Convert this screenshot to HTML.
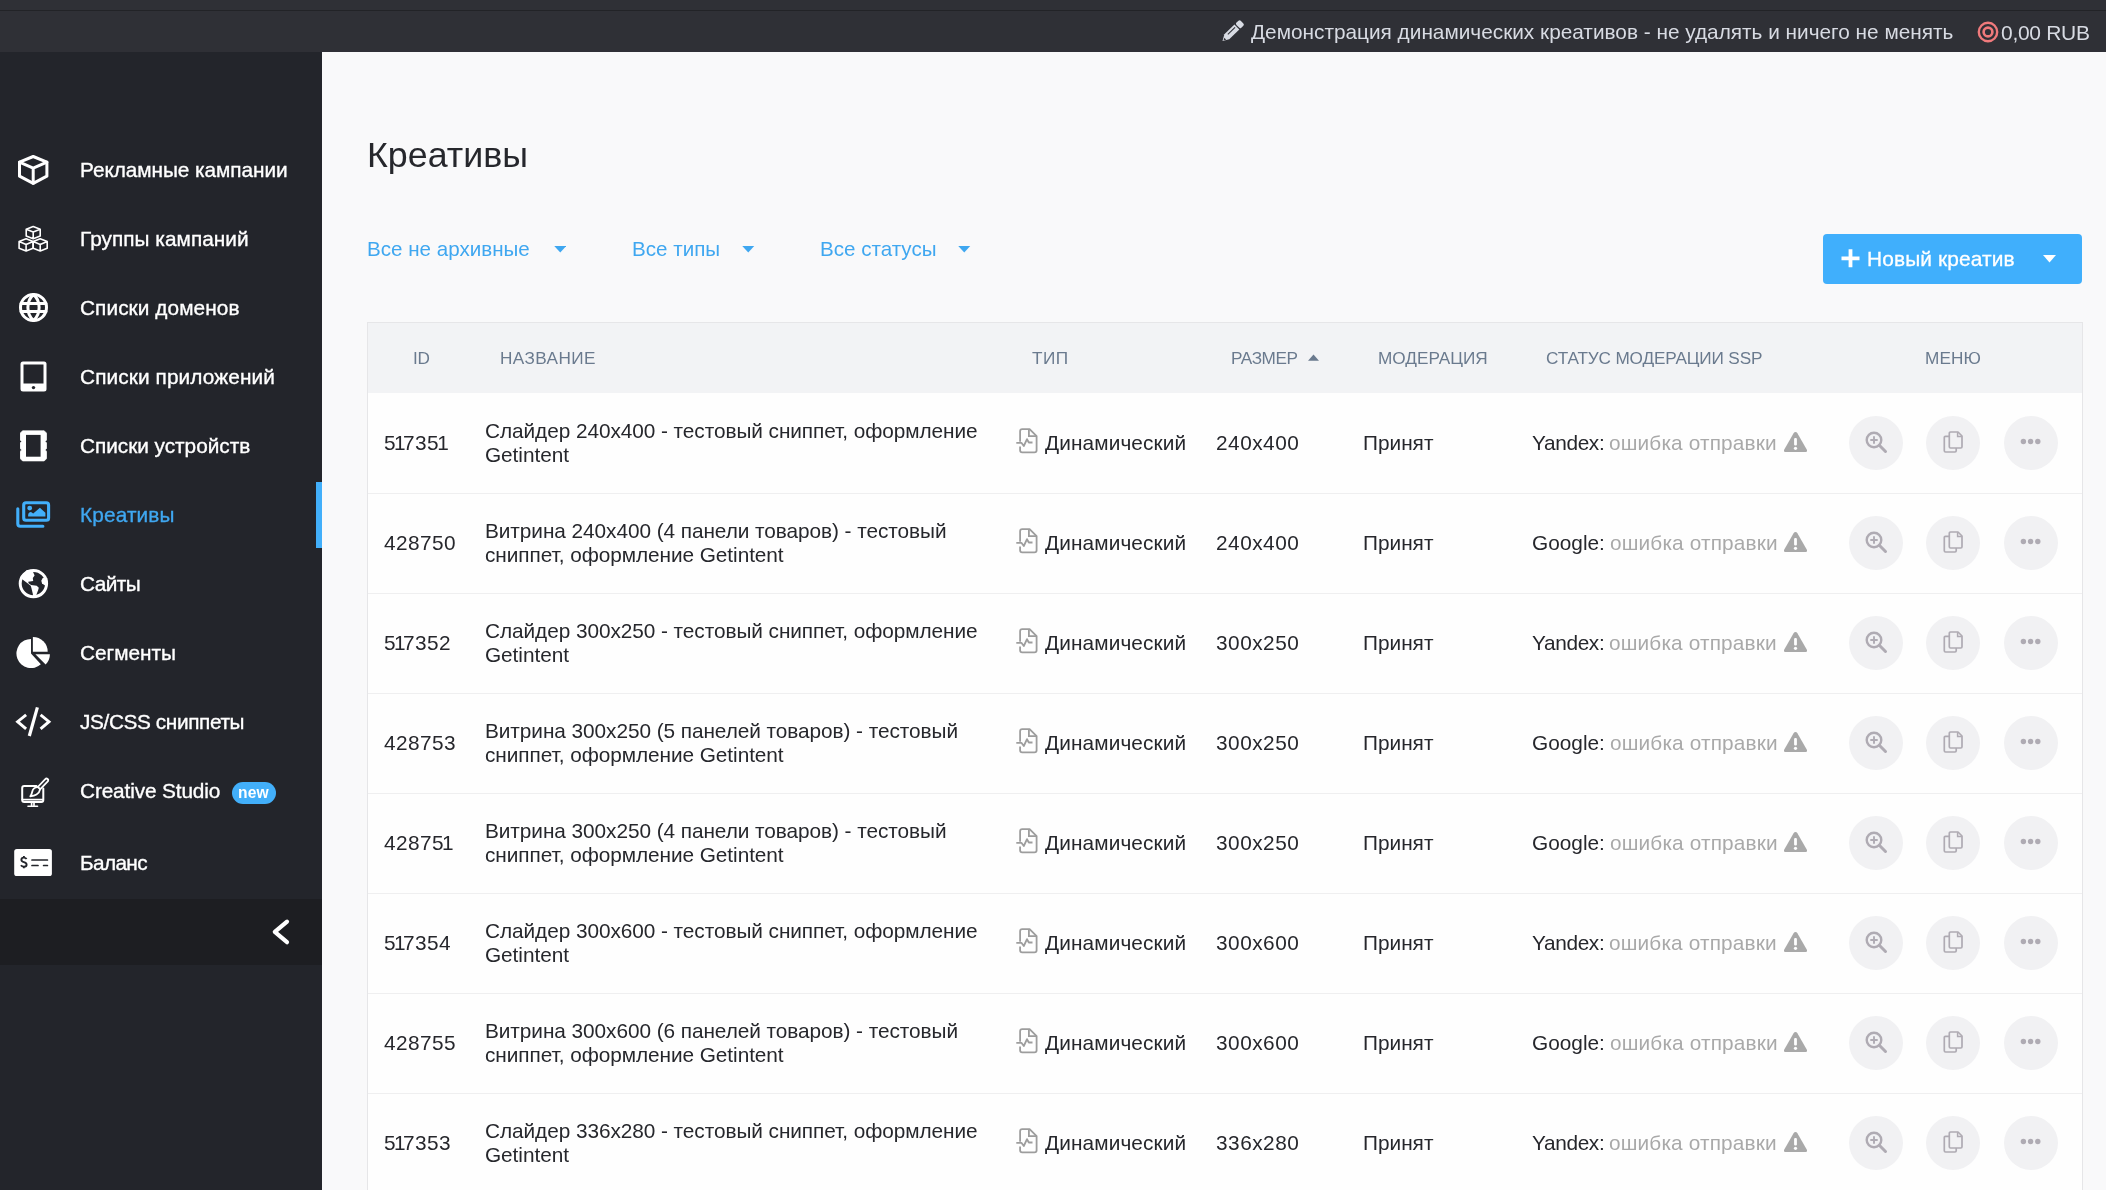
<!DOCTYPE html>
<html><head><meta charset="utf-8"><title>Креативы</title>
<style>
html,body{margin:0;padding:0;}
body{width:2106px;height:1190px;overflow:hidden;position:relative;background:#f9f9fa;font-family:"Liberation Sans", sans-serif;}
.r{position:absolute;}
.t{position:absolute;line-height:1;white-space:nowrap;font-family:"Liberation Sans", sans-serif;will-change:transform;}
.side{-webkit-text-stroke:0.35px currentColor;}
.semi{-webkit-text-stroke:0.3px currentColor;}
</style></head><body>
<div class="r" style="left:0px;top:0px;width:2106px;height:52px;background:#2f3036;"></div>
<div class="r" style="left:0px;top:10px;width:2106px;height:1px;background:#222327;"></div>
<svg class="r" style="left:1216px;top:14px;" width="34" height="34" viewBox="0 0 34 34"><g transform="translate(16.2,17.6) rotate(-44) translate(-13.5,0)"><path d="M0 0 L6 -3.5 H20 V3.5 H6 Z" fill="#d8dbe3"/><path d="M8.5 -1.1 H18.5" stroke="#2f3036" stroke-width="1.1"/><path d="M1.3 0.3 L3.6 -1.1 V1.6 Z" fill="#2f3036"/><rect x="21.2" y="-3.5" width="6" height="7" rx="1.6" fill="#d8dbe3"/></g></svg>
<div class="t " style="left:1250.50px;top:21.92px;font-size:20.80px;color:#d8dbe3;">Демонстрация динамических креативов - не удалять и ничего не менять</div>
<svg class="r" style="left:1977px;top:20.5px;" width="22" height="22" viewBox="0 0 22 22"><circle cx="11" cy="11" r="9.2" fill="none" stroke="#f07a7c" stroke-width="2.4"/><circle cx="11" cy="11" r="4.4" fill="none" stroke="#f07a7c" stroke-width="2.6"/></svg>
<div class="t " style="left:2001.00px;top:21.75px;font-size:21.00px;color:#d8dbe3;letter-spacing:-0.300px;">0,00 RUB</div>
<div class="r" style="left:0px;top:52px;width:322px;height:1138px;background:#23252b;"></div>
<div class="r" style="left:0px;top:899px;width:322px;height:66px;background:#1d1e22;"></div>
<div class="r" style="left:316px;top:482px;width:6px;height:66px;background:#42affa;"></div>
<div class="t side" style="left:79.60px;top:160.32px;font-size:20.80px;color:#ffffff;letter-spacing:-0.060px;">Рекламные кампании</div>
<div class="t side" style="left:79.60px;top:229.32px;font-size:20.80px;color:#ffffff;letter-spacing:0.040px;">Группы кампаний</div>
<div class="t side" style="left:79.60px;top:298.32px;font-size:20.80px;color:#ffffff;letter-spacing:0.077px;">Списки доменов</div>
<div class="t side" style="left:79.60px;top:367.32px;font-size:20.80px;color:#ffffff;letter-spacing:0.110px;">Списки приложений</div>
<div class="t side" style="left:79.60px;top:436.32px;font-size:20.80px;color:#ffffff;letter-spacing:-0.027px;">Списки устройств</div>
<div class="t side" style="left:79.60px;top:505.32px;font-size:20.80px;color:#3fa7f0;letter-spacing:0.140px;">Креативы</div>
<div class="t side" style="left:79.60px;top:574.32px;font-size:20.80px;color:#ffffff;letter-spacing:-0.570px;">Сайты</div>
<div class="t side" style="left:79.60px;top:643.32px;font-size:20.80px;color:#ffffff;">Сегменты</div>
<div class="t side" style="left:79.60px;top:712.32px;font-size:20.80px;color:#ffffff;letter-spacing:-0.390px;">JS/CSS сниппеты</div>
<div class="t side" style="left:79.60px;top:781.32px;font-size:20.80px;color:#ffffff;letter-spacing:-0.130px;">Creative Studio</div>
<div class="t side" style="left:79.60px;top:852.92px;font-size:20.80px;color:#ffffff;letter-spacing:-0.640px;">Баланс</div>
<div class="r" style="left:232px;top:782px;width:44px;height:22px;background:#42affa;border-radius:11px;"></div>
<div class="t " style="left:237.60px;top:785.34px;font-size:15.60px;color:#ffffff;letter-spacing:0.100px;font-weight:bold;">new</div>
<svg class="r" style="left:270px;top:916px;" width="22" height="32" viewBox="0 0 22 32"><path d="M17 5.6 L4.8 15.9 L17 26.2" fill="none" stroke="#fff" stroke-width="4.2" stroke-linecap="round" stroke-linejoin="round"/></svg>
<svg class="r" style="left:17px;top:154px;" width="32" height="32" viewBox="0 0 32 32"><g stroke="#fff" fill="none" stroke-linejoin="round" stroke-linecap="round" stroke-width="3"><path d="M16.2 2.5 L29.9 8.2 V22.2 L16.2 29.3 L2.5 22.2 V8.2 Z"/><path d="M2.5 8.2 L16.2 14.2 L29.9 8.2 M16.2 14.2 V29.3"/></g></svg>
<svg class="r" style="left:12px;top:218px;" width="42" height="42" viewBox="0 0 42 42"><g stroke="#fff" fill="none" stroke-linejoin="round" stroke-linecap="round" stroke-width="1.6"><path d="M21.2 8.5 L28.2 11.3 V17.9 L21.2 20.700000000000003 L14.2 17.9 V11.3 Z M14.2 11.3 L21.2 14.100000000000001 L28.2 11.3 M21.2 14.100000000000001 V20.700000000000003"/><path d="M14.1 20.8 L21.1 23.6 V30.200000000000003 L14.1 33.0 L7.1 30.200000000000003 V23.6 Z M7.1 23.6 L14.1 26.400000000000002 L21.1 23.6 M14.1 26.400000000000002 V33.0"/><path d="M28.2 20.8 L35.2 23.6 V30.200000000000003 L28.2 33.0 L21.2 30.200000000000003 V23.6 Z M21.2 23.6 L28.2 26.400000000000002 L35.2 23.6 M28.2 26.400000000000002 V33.0"/></g></svg>
<svg class="r" style="left:18px;top:292px;" width="31" height="31" viewBox="0 0 31 31"><g stroke="#fff" fill="none" stroke-linejoin="round" stroke-linecap="round" stroke-width="3"><circle cx="15.5" cy="15.5" r="13"/><path d="M15.5 2.5 C8 9 8 22 15.5 28.5 C23 22 23 9 15.5 2.5"/><path d="M3 11.6 H28 M3 19.5 H28"/></g></svg>
<svg class="r" style="left:20px;top:361px;" width="27" height="31" viewBox="0 0 27 31"><rect x="0.5" y="0.5" width="26" height="30" rx="2.5" fill="#fff"/><rect x="3.5" y="3.5" width="20" height="19" fill="#23252b"/><circle cx="13.5" cy="26.6" r="1.7" fill="#23252b"/></svg>
<svg class="r" style="left:20px;top:429px;" width="27" height="33" viewBox="0 0 27 33"><path d="M2.6 1.7 H24.2 L26.7 4.2 V10.9 L25.2 12.4 L26.7 13.9 V19.4 L25.2 20.9 L26.7 22.4 V29.5 L24.2 32 H2.6 L0.1 29.5 V22.4 L1.6 20.9 L0.1 19.4 V13.9 L1.6 12.4 L0.1 10.9 V4.2 Z" fill="#fff" stroke="#fff" stroke-width="0.6" stroke-linejoin="round"/><rect x="6" y="5.9" width="14.6" height="21.8" fill="#23252b"/></svg>
<svg class="r" style="left:16px;top:501px;" width="36" height="30" viewBox="0 0 36 30"><path d="M1.8 7.7 V22.7 Q1.8 25.2 4.3 25.2 H26.9" stroke="#42affa" fill="none" stroke-linejoin="round" stroke-width="3.1" stroke-linecap="round"/><rect x="7.7" y="1.8" width="24.9" height="17.5" rx="2.3" stroke="#42affa" fill="none" stroke-linejoin="round" stroke-width="3.1"/><circle cx="13.7" cy="7.1" r="2.4" fill="#42affa"/><path d="M12.2 15.6 Q11.6 11.3 15 11.1 L17.2 12.4 L23.9 6.8 L29.4 11.8 V15.6 Z" fill="#42affa"/></svg>
<svg class="r" style="left:12px;top:562px;" width="42" height="42" viewBox="0 0 42 42"><path d="M10.2 17.3 L8.1 15.5 L14.8 8.1 L21.2 8.1 L21.2 10.2 L22.6 13.4 L20.8 15.9 L21.2 19.1 L16.2 19.8 L16.6 21.2 L19.1 22.9 L24.7 23.7 L26.8 25.8 L26.1 28.2 L24.4 32.8 L24.4 34.9 L21.2 34.9 L20.8 31.8 L19.4 26.1 L18.7 23.7 L15.5 21.2 Z" fill="#fff"/><path d="M30.7 15.9 L29.3 18.7 L30 21.2 L32.5 23.3 L35.3 22.9 L35.3 15.9 Z" fill="#fff"/><circle cx="21.4" cy="21.6" r="13.2" fill="none" stroke="#fff" stroke-width="3"/></svg>
<svg class="r" style="left:10px;top:632px;" width="46" height="42" viewBox="0 0 46 42"><path d="M21 21.5 V6.9 A14.6 14.6 0 1 0 30.85 32.3 Z" fill="#fff"/><path d="M22.9 19.8 V5 A14.8 14.8 0 0 1 37.7 19.8 Z" fill="#fff"/><path d="M25.4 22.2 H39.9 A14.5 14.5 0 0 1 35.65 32.45 Z" fill="#fff"/></svg>
<svg class="r" style="left:12px;top:700px;" width="42" height="42" viewBox="0 0 42 42"><g stroke="#fff" fill="none" stroke-width="2.9" stroke-linejoin="miter"><path d="M14.1 14.8 L5.6 21.7 L14.1 28.9"/><path d="M28.6 14.8 L37 21.7 L28.6 28.9"/><path d="M25.4 7.4 L17.3 36" stroke-width="3.2"/></g></svg>
<svg class="r" style="left:14px;top:770px;" width="42" height="42" viewBox="0 0 42 42"><g stroke="#fff" fill="none" stroke-width="2" stroke-linejoin="round" stroke-linecap="round"><path d="M22.5 16 H10.2 Q8.2 16 8.2 18 V30.1 Q8.2 32.1 10.2 32.1 H27.3 Q29.3 32.1 29.3 30.1 V18.5"/><path d="M8.3 29.6 H29.2" stroke-width="1.6"/><path d="M17.6 32.5 V35.5 M20 32.5 V35.5" stroke-width="1.7"/><path d="M14 36.2 H23.5" stroke-width="1.6"/><path d="M33 8.6 Q34.8 9.5 34 11.2 L26.3 19.2 L23.8 17 L31.3 9.2 Q32 8.3 33 8.6 Z" stroke-width="1.8"/><path d="M23.6 17.2 Q19.2 17.5 18.3 21.5 Q17.7 24.5 16.3 26.4 Q20.3 26 22.5 24.6 Q25.6 22.6 26.1 19.4" stroke-width="1.8"/></g></svg>
<svg class="r" style="left:8px;top:842px;" width="50" height="42" viewBox="0 0 50 42"><rect x="6.2" y="7.1" width="37.7" height="27" rx="2.6" fill="#fff"/><path d="M18.6 17 Q17.6 15.6 15.8 15.6 Q13.4 15.6 13.4 17.7 Q13.4 19.5 15.9 20.1 Q18.6 20.7 18.6 22.7 Q18.6 24.7 15.9 24.7 Q13.9 24.7 12.9 23.3 M15.9 14.1 V15.6 M15.9 24.7 V26.2" fill="none" stroke="#23252b" stroke-width="1.9"/><path d="M24 18 H39.4 M24 23.5 H30 M35.6 23.5 H39.4" stroke="#23252b" stroke-width="1.7" stroke-linecap="round"/></svg>
<div class="r" style="left:322px;top:52px;width:1784px;height:1138px;background:#f9f9fa;"></div>
<div class="t " style="left:366.80px;top:137.57px;font-size:35.80px;color:#26272c;">Креативы</div>
<div class="t filt" style="left:367.30px;top:239.29px;font-size:20.60px;color:#3fa7f0;">Все не архивные</div>
<svg class="r" style="left:553.8px;top:246px;" width="12.5" height="7" viewBox="0 0 12 7"><path d="M0 0 H12 L6 6.6 Z" fill="#3fa7f0"/></svg>
<div class="t filt" style="left:631.70px;top:239.29px;font-size:20.60px;color:#3fa7f0;">Все типы</div>
<svg class="r" style="left:742px;top:246px;" width="12.5" height="7" viewBox="0 0 12 7"><path d="M0 0 H12 L6 6.6 Z" fill="#3fa7f0"/></svg>
<div class="t filt" style="left:819.70px;top:239.29px;font-size:20.60px;color:#3fa7f0;">Все статусы</div>
<svg class="r" style="left:958px;top:246px;" width="12.5" height="7" viewBox="0 0 12 7"><path d="M0 0 H12 L6 6.6 Z" fill="#3fa7f0"/></svg>
<div class="r" style="left:1823px;top:234px;width:259px;height:50px;background:#40affc;border-radius:4px;"></div>
<svg class="r" style="left:1841px;top:249px;" width="19" height="19" viewBox="0 0 19 19"><path d="M9.5 0.3 V18.3 M0.5 9.3 H18.5" stroke="#fff" stroke-width="3.8"/></svg>
<div class="t semi" style="left:1867.20px;top:249.24px;font-size:20.90px;color:#ffffff;letter-spacing:0.120px;">Новый креатив</div>
<svg class="r" style="left:2043px;top:255px;" width="13" height="8" viewBox="0 0 13 8"><path d="M0 0 H13 L6.5 7.5 Z" fill="#fff"/></svg>
<div class="r" style="left:367px;top:322px;width:1716px;height:868px;background:#e6e6e8;"></div>
<div class="r" style="left:368px;top:323px;width:1714px;height:70px;background:#f2f3f5;"></div>
<div class="r" style="left:368px;top:393px;width:1714px;height:797px;background:#fefefe;"></div>
<div class="t head" style="left:412.80px;top:349.68px;font-size:17.20px;color:#6a7a8e;letter-spacing:-0.250px;">ID</div>
<div class="t head" style="left:499.90px;top:349.68px;font-size:17.20px;color:#6a7a8e;letter-spacing:0.400px;">НАЗВАНИЕ</div>
<div class="t head" style="left:1031.70px;top:349.68px;font-size:17.20px;color:#6a7a8e;letter-spacing:0.450px;">ТИП</div>
<div class="t head" style="left:1230.80px;top:349.68px;font-size:17.20px;color:#6a7a8e;letter-spacing:-0.450px;">РАЗМЕР</div>
<div class="t head" style="left:1377.80px;top:349.68px;font-size:17.20px;color:#6a7a8e;">МОДЕРАЦИЯ</div>
<div class="t head" style="left:1546.30px;top:349.68px;font-size:17.20px;color:#6a7a8e;letter-spacing:-0.150px;">СТАТУС МОДЕРАЦИИ SSP</div>
<div class="t head" style="left:1924.80px;top:349.68px;font-size:17.20px;color:#6a7a8e;letter-spacing:0.100px;">МЕНЮ</div>
<svg class="r" style="left:1307.6px;top:354px;" width="11" height="7" viewBox="0 0 11 7"><path d="M0 6.8 H11 L5.5 0.6 Z" fill="#6a7a8e"/></svg>
<div class="t " style="left:383.60px;top:433.32px;font-size:20.80px;color:#26272c;letter-spacing:0.450px;">5<span style="margin:0 -3px 0 -2px">1</span>735<span style="margin:0 -3px 0 -2px">1</span></div>
<div class="t " style="left:485.20px;top:420.72px;font-size:20.80px;color:#26272c;letter-spacing:-0.060px;">Слайдер 240x400 - тестовый сниппет, оформление</div>
<div class="t " style="left:485.20px;top:444.62px;font-size:20.80px;color:#26272c;letter-spacing:-0.060px;">Getintent</div>
<svg class="r" style="left:1016px;top:428px;" width="22" height="26" viewBox="0 0 22 26"><path d="M4.1 13.8 V3.3 Q4.1 1.2 6.2 1.2 H13.6 L20.6 8.2 V22.3 Q20.6 24.4 18.5 24.4 H6.2 Q4.1 24.4 4.1 22.3 V18.4" fill="none" stroke="#9d9d9d" stroke-width="1.8" stroke-linejoin="round"/><path d="M12.9 1.4 V8.1 H20.4" fill="none" stroke="#9d9d9d" stroke-width="1.8"/><path d="M0.3 14.8 H5.4 L7.8 18 L11 11.1 L12.8 14.5 H16.5" fill="none" stroke="#9d9d9d" stroke-width="1.8" stroke-linejoin="round"/></svg>
<div class="t " style="left:1045.00px;top:433.32px;font-size:20.80px;color:#26272c;letter-spacing:0.120px;">Динамический</div>
<div class="t " style="left:1216.00px;top:433.32px;font-size:20.80px;color:#26272c;letter-spacing:0.500px;">240x400</div>
<div class="t " style="left:1363.20px;top:433.32px;font-size:20.80px;color:#26272c;">Принят</div>
<div class="t " style="left:1532.30px;top:433.32px;font-size:20.80px;color:#26272c;letter-spacing:-0.350px;">Yandex:</div>
<div class="t " style="left:1609.00px;top:433.32px;font-size:20.80px;color:#a9a9a9;letter-spacing:0.150px;">ошибка отправки</div>
<svg class="r" style="left:1783px;top:430.5px;" width="25" height="22" viewBox="0 0 25 22"><path d="M12.5 1 Q13.7 1 14.4 2.2 L24 19 Q24.6 20.8 22.8 21 H2.2 Q0.4 20.8 1 19 L10.6 2.2 Q11.3 1 12.5 1 Z" fill="#a9a9a9"/><rect x="11.1" y="7" width="2.8" height="7.6" rx="1" fill="#fff"/><circle cx="12.5" cy="17.3" r="1.6" fill="#fff"/></svg>
<div class="r" style="left:1849px;top:416px;width:54px;height:54px;border-radius:50%;background:#f1f1f3"></div>
<div class="r" style="left:1926px;top:416px;width:54px;height:54px;border-radius:50%;background:#f1f1f3"></div>
<div class="r" style="left:2004px;top:416px;width:54px;height:54px;border-radius:50%;background:#f1f1f3"></div>
<svg class="r" style="left:1863px;top:429px;" width="26" height="26" viewBox="0 0 26 26"><circle cx="11" cy="11" r="7.3" fill="none" stroke="#afabb3" stroke-width="2.4"/><path d="M16.3 16.3 L22.5 22.5" stroke="#afabb3" stroke-width="3" stroke-linecap="round"/><path d="M11 7.3 V14.7 M7.3 11 H14.7" stroke="#afabb3" stroke-width="1.9"/></svg>
<svg class="r" style="left:1942px;top:430px;" width="22" height="24" viewBox="0 0 22 24"><path d="M7.5 6.3 H3.5 Q2.3 6.3 2.3 7.5 V20.8 Q2.3 22 3.5 22 H13 Q14.2 22 14.2 20.8 V18" fill="none" stroke="#afabb3" stroke-width="1.7"/><path d="M8.5 2 H16 L20 6 V16.8 Q20 18 18.8 18 H8.5 Q7.3 18 7.3 16.8 V3.2 Q7.3 2 8.5 2 Z" fill="none" stroke="#afabb3" stroke-width="1.7" stroke-linejoin="round"/><path d="M15.6 2.2 V6.4 H19.8" fill="none" stroke="#afabb3" stroke-width="1.5"/></svg>
<svg class="r" style="left:2020px;top:437px;" width="22" height="9" viewBox="0 0 22 9"><circle cx="3.4" cy="4.5" r="2.7" fill="#afabb3"/><circle cx="10.6" cy="4.5" r="2.7" fill="#afabb3"/><circle cx="17.8" cy="4.5" r="2.7" fill="#afabb3"/></svg>
<div class="r" style="left:368px;top:493px;width:1714px;height:1px;background:#efeff0;"></div>
<div class="t " style="left:383.60px;top:533.32px;font-size:20.80px;color:#26272c;letter-spacing:0.450px;">428750</div>
<div class="t " style="left:485.20px;top:520.72px;font-size:20.80px;color:#26272c;letter-spacing:-0.060px;">Витрина 240x400 (4 панели товаров) - тестовый</div>
<div class="t " style="left:485.20px;top:544.62px;font-size:20.80px;color:#26272c;letter-spacing:-0.060px;">сниппет, оформление Getintent</div>
<svg class="r" style="left:1016px;top:528px;" width="22" height="26" viewBox="0 0 22 26"><path d="M4.1 13.8 V3.3 Q4.1 1.2 6.2 1.2 H13.6 L20.6 8.2 V22.3 Q20.6 24.4 18.5 24.4 H6.2 Q4.1 24.4 4.1 22.3 V18.4" fill="none" stroke="#9d9d9d" stroke-width="1.8" stroke-linejoin="round"/><path d="M12.9 1.4 V8.1 H20.4" fill="none" stroke="#9d9d9d" stroke-width="1.8"/><path d="M0.3 14.8 H5.4 L7.8 18 L11 11.1 L12.8 14.5 H16.5" fill="none" stroke="#9d9d9d" stroke-width="1.8" stroke-linejoin="round"/></svg>
<div class="t " style="left:1045.00px;top:533.32px;font-size:20.80px;color:#26272c;letter-spacing:0.120px;">Динамический</div>
<div class="t " style="left:1216.00px;top:533.32px;font-size:20.80px;color:#26272c;letter-spacing:0.500px;">240x400</div>
<div class="t " style="left:1363.20px;top:533.32px;font-size:20.80px;color:#26272c;">Принят</div>
<div class="t " style="left:1532.30px;top:533.32px;font-size:20.80px;color:#26272c;">Google:</div>
<div class="t " style="left:1610.00px;top:533.32px;font-size:20.80px;color:#a9a9a9;letter-spacing:0.150px;">ошибка отправки</div>
<svg class="r" style="left:1783px;top:530.5px;" width="25" height="22" viewBox="0 0 25 22"><path d="M12.5 1 Q13.7 1 14.4 2.2 L24 19 Q24.6 20.8 22.8 21 H2.2 Q0.4 20.8 1 19 L10.6 2.2 Q11.3 1 12.5 1 Z" fill="#a9a9a9"/><rect x="11.1" y="7" width="2.8" height="7.6" rx="1" fill="#fff"/><circle cx="12.5" cy="17.3" r="1.6" fill="#fff"/></svg>
<div class="r" style="left:1849px;top:516px;width:54px;height:54px;border-radius:50%;background:#f1f1f3"></div>
<div class="r" style="left:1926px;top:516px;width:54px;height:54px;border-radius:50%;background:#f1f1f3"></div>
<div class="r" style="left:2004px;top:516px;width:54px;height:54px;border-radius:50%;background:#f1f1f3"></div>
<svg class="r" style="left:1863px;top:529px;" width="26" height="26" viewBox="0 0 26 26"><circle cx="11" cy="11" r="7.3" fill="none" stroke="#afabb3" stroke-width="2.4"/><path d="M16.3 16.3 L22.5 22.5" stroke="#afabb3" stroke-width="3" stroke-linecap="round"/><path d="M11 7.3 V14.7 M7.3 11 H14.7" stroke="#afabb3" stroke-width="1.9"/></svg>
<svg class="r" style="left:1942px;top:530px;" width="22" height="24" viewBox="0 0 22 24"><path d="M7.5 6.3 H3.5 Q2.3 6.3 2.3 7.5 V20.8 Q2.3 22 3.5 22 H13 Q14.2 22 14.2 20.8 V18" fill="none" stroke="#afabb3" stroke-width="1.7"/><path d="M8.5 2 H16 L20 6 V16.8 Q20 18 18.8 18 H8.5 Q7.3 18 7.3 16.8 V3.2 Q7.3 2 8.5 2 Z" fill="none" stroke="#afabb3" stroke-width="1.7" stroke-linejoin="round"/><path d="M15.6 2.2 V6.4 H19.8" fill="none" stroke="#afabb3" stroke-width="1.5"/></svg>
<svg class="r" style="left:2020px;top:537px;" width="22" height="9" viewBox="0 0 22 9"><circle cx="3.4" cy="4.5" r="2.7" fill="#afabb3"/><circle cx="10.6" cy="4.5" r="2.7" fill="#afabb3"/><circle cx="17.8" cy="4.5" r="2.7" fill="#afabb3"/></svg>
<div class="r" style="left:368px;top:593px;width:1714px;height:1px;background:#efeff0;"></div>
<div class="t " style="left:383.60px;top:633.32px;font-size:20.80px;color:#26272c;letter-spacing:0.450px;">5<span style="margin:0 -3px 0 -2px">1</span>7352</div>
<div class="t " style="left:485.20px;top:620.72px;font-size:20.80px;color:#26272c;letter-spacing:-0.060px;">Слайдер 300x250 - тестовый сниппет, оформление</div>
<div class="t " style="left:485.20px;top:644.62px;font-size:20.80px;color:#26272c;letter-spacing:-0.060px;">Getintent</div>
<svg class="r" style="left:1016px;top:628px;" width="22" height="26" viewBox="0 0 22 26"><path d="M4.1 13.8 V3.3 Q4.1 1.2 6.2 1.2 H13.6 L20.6 8.2 V22.3 Q20.6 24.4 18.5 24.4 H6.2 Q4.1 24.4 4.1 22.3 V18.4" fill="none" stroke="#9d9d9d" stroke-width="1.8" stroke-linejoin="round"/><path d="M12.9 1.4 V8.1 H20.4" fill="none" stroke="#9d9d9d" stroke-width="1.8"/><path d="M0.3 14.8 H5.4 L7.8 18 L11 11.1 L12.8 14.5 H16.5" fill="none" stroke="#9d9d9d" stroke-width="1.8" stroke-linejoin="round"/></svg>
<div class="t " style="left:1045.00px;top:633.32px;font-size:20.80px;color:#26272c;letter-spacing:0.120px;">Динамический</div>
<div class="t " style="left:1216.00px;top:633.32px;font-size:20.80px;color:#26272c;letter-spacing:0.500px;">300x250</div>
<div class="t " style="left:1363.20px;top:633.32px;font-size:20.80px;color:#26272c;">Принят</div>
<div class="t " style="left:1532.30px;top:633.32px;font-size:20.80px;color:#26272c;letter-spacing:-0.350px;">Yandex:</div>
<div class="t " style="left:1609.00px;top:633.32px;font-size:20.80px;color:#a9a9a9;letter-spacing:0.150px;">ошибка отправки</div>
<svg class="r" style="left:1783px;top:630.5px;" width="25" height="22" viewBox="0 0 25 22"><path d="M12.5 1 Q13.7 1 14.4 2.2 L24 19 Q24.6 20.8 22.8 21 H2.2 Q0.4 20.8 1 19 L10.6 2.2 Q11.3 1 12.5 1 Z" fill="#a9a9a9"/><rect x="11.1" y="7" width="2.8" height="7.6" rx="1" fill="#fff"/><circle cx="12.5" cy="17.3" r="1.6" fill="#fff"/></svg>
<div class="r" style="left:1849px;top:616px;width:54px;height:54px;border-radius:50%;background:#f1f1f3"></div>
<div class="r" style="left:1926px;top:616px;width:54px;height:54px;border-radius:50%;background:#f1f1f3"></div>
<div class="r" style="left:2004px;top:616px;width:54px;height:54px;border-radius:50%;background:#f1f1f3"></div>
<svg class="r" style="left:1863px;top:629px;" width="26" height="26" viewBox="0 0 26 26"><circle cx="11" cy="11" r="7.3" fill="none" stroke="#afabb3" stroke-width="2.4"/><path d="M16.3 16.3 L22.5 22.5" stroke="#afabb3" stroke-width="3" stroke-linecap="round"/><path d="M11 7.3 V14.7 M7.3 11 H14.7" stroke="#afabb3" stroke-width="1.9"/></svg>
<svg class="r" style="left:1942px;top:630px;" width="22" height="24" viewBox="0 0 22 24"><path d="M7.5 6.3 H3.5 Q2.3 6.3 2.3 7.5 V20.8 Q2.3 22 3.5 22 H13 Q14.2 22 14.2 20.8 V18" fill="none" stroke="#afabb3" stroke-width="1.7"/><path d="M8.5 2 H16 L20 6 V16.8 Q20 18 18.8 18 H8.5 Q7.3 18 7.3 16.8 V3.2 Q7.3 2 8.5 2 Z" fill="none" stroke="#afabb3" stroke-width="1.7" stroke-linejoin="round"/><path d="M15.6 2.2 V6.4 H19.8" fill="none" stroke="#afabb3" stroke-width="1.5"/></svg>
<svg class="r" style="left:2020px;top:637px;" width="22" height="9" viewBox="0 0 22 9"><circle cx="3.4" cy="4.5" r="2.7" fill="#afabb3"/><circle cx="10.6" cy="4.5" r="2.7" fill="#afabb3"/><circle cx="17.8" cy="4.5" r="2.7" fill="#afabb3"/></svg>
<div class="r" style="left:368px;top:693px;width:1714px;height:1px;background:#efeff0;"></div>
<div class="t " style="left:383.60px;top:733.32px;font-size:20.80px;color:#26272c;letter-spacing:0.450px;">428753</div>
<div class="t " style="left:485.20px;top:720.72px;font-size:20.80px;color:#26272c;letter-spacing:-0.060px;">Витрина 300x250 (5 панелей товаров) - тестовый</div>
<div class="t " style="left:485.20px;top:744.62px;font-size:20.80px;color:#26272c;letter-spacing:-0.060px;">сниппет, оформление Getintent</div>
<svg class="r" style="left:1016px;top:728px;" width="22" height="26" viewBox="0 0 22 26"><path d="M4.1 13.8 V3.3 Q4.1 1.2 6.2 1.2 H13.6 L20.6 8.2 V22.3 Q20.6 24.4 18.5 24.4 H6.2 Q4.1 24.4 4.1 22.3 V18.4" fill="none" stroke="#9d9d9d" stroke-width="1.8" stroke-linejoin="round"/><path d="M12.9 1.4 V8.1 H20.4" fill="none" stroke="#9d9d9d" stroke-width="1.8"/><path d="M0.3 14.8 H5.4 L7.8 18 L11 11.1 L12.8 14.5 H16.5" fill="none" stroke="#9d9d9d" stroke-width="1.8" stroke-linejoin="round"/></svg>
<div class="t " style="left:1045.00px;top:733.32px;font-size:20.80px;color:#26272c;letter-spacing:0.120px;">Динамический</div>
<div class="t " style="left:1216.00px;top:733.32px;font-size:20.80px;color:#26272c;letter-spacing:0.500px;">300x250</div>
<div class="t " style="left:1363.20px;top:733.32px;font-size:20.80px;color:#26272c;">Принят</div>
<div class="t " style="left:1532.30px;top:733.32px;font-size:20.80px;color:#26272c;">Google:</div>
<div class="t " style="left:1610.00px;top:733.32px;font-size:20.80px;color:#a9a9a9;letter-spacing:0.150px;">ошибка отправки</div>
<svg class="r" style="left:1783px;top:730.5px;" width="25" height="22" viewBox="0 0 25 22"><path d="M12.5 1 Q13.7 1 14.4 2.2 L24 19 Q24.6 20.8 22.8 21 H2.2 Q0.4 20.8 1 19 L10.6 2.2 Q11.3 1 12.5 1 Z" fill="#a9a9a9"/><rect x="11.1" y="7" width="2.8" height="7.6" rx="1" fill="#fff"/><circle cx="12.5" cy="17.3" r="1.6" fill="#fff"/></svg>
<div class="r" style="left:1849px;top:716px;width:54px;height:54px;border-radius:50%;background:#f1f1f3"></div>
<div class="r" style="left:1926px;top:716px;width:54px;height:54px;border-radius:50%;background:#f1f1f3"></div>
<div class="r" style="left:2004px;top:716px;width:54px;height:54px;border-radius:50%;background:#f1f1f3"></div>
<svg class="r" style="left:1863px;top:729px;" width="26" height="26" viewBox="0 0 26 26"><circle cx="11" cy="11" r="7.3" fill="none" stroke="#afabb3" stroke-width="2.4"/><path d="M16.3 16.3 L22.5 22.5" stroke="#afabb3" stroke-width="3" stroke-linecap="round"/><path d="M11 7.3 V14.7 M7.3 11 H14.7" stroke="#afabb3" stroke-width="1.9"/></svg>
<svg class="r" style="left:1942px;top:730px;" width="22" height="24" viewBox="0 0 22 24"><path d="M7.5 6.3 H3.5 Q2.3 6.3 2.3 7.5 V20.8 Q2.3 22 3.5 22 H13 Q14.2 22 14.2 20.8 V18" fill="none" stroke="#afabb3" stroke-width="1.7"/><path d="M8.5 2 H16 L20 6 V16.8 Q20 18 18.8 18 H8.5 Q7.3 18 7.3 16.8 V3.2 Q7.3 2 8.5 2 Z" fill="none" stroke="#afabb3" stroke-width="1.7" stroke-linejoin="round"/><path d="M15.6 2.2 V6.4 H19.8" fill="none" stroke="#afabb3" stroke-width="1.5"/></svg>
<svg class="r" style="left:2020px;top:737px;" width="22" height="9" viewBox="0 0 22 9"><circle cx="3.4" cy="4.5" r="2.7" fill="#afabb3"/><circle cx="10.6" cy="4.5" r="2.7" fill="#afabb3"/><circle cx="17.8" cy="4.5" r="2.7" fill="#afabb3"/></svg>
<div class="r" style="left:368px;top:793px;width:1714px;height:1px;background:#efeff0;"></div>
<div class="t " style="left:383.60px;top:833.32px;font-size:20.80px;color:#26272c;letter-spacing:0.450px;">42875<span style="margin:0 -3px 0 -2px">1</span></div>
<div class="t " style="left:485.20px;top:820.72px;font-size:20.80px;color:#26272c;letter-spacing:-0.060px;">Витрина 300x250 (4 панели товаров) - тестовый</div>
<div class="t " style="left:485.20px;top:844.62px;font-size:20.80px;color:#26272c;letter-spacing:-0.060px;">сниппет, оформление Getintent</div>
<svg class="r" style="left:1016px;top:828px;" width="22" height="26" viewBox="0 0 22 26"><path d="M4.1 13.8 V3.3 Q4.1 1.2 6.2 1.2 H13.6 L20.6 8.2 V22.3 Q20.6 24.4 18.5 24.4 H6.2 Q4.1 24.4 4.1 22.3 V18.4" fill="none" stroke="#9d9d9d" stroke-width="1.8" stroke-linejoin="round"/><path d="M12.9 1.4 V8.1 H20.4" fill="none" stroke="#9d9d9d" stroke-width="1.8"/><path d="M0.3 14.8 H5.4 L7.8 18 L11 11.1 L12.8 14.5 H16.5" fill="none" stroke="#9d9d9d" stroke-width="1.8" stroke-linejoin="round"/></svg>
<div class="t " style="left:1045.00px;top:833.32px;font-size:20.80px;color:#26272c;letter-spacing:0.120px;">Динамический</div>
<div class="t " style="left:1216.00px;top:833.32px;font-size:20.80px;color:#26272c;letter-spacing:0.500px;">300x250</div>
<div class="t " style="left:1363.20px;top:833.32px;font-size:20.80px;color:#26272c;">Принят</div>
<div class="t " style="left:1532.30px;top:833.32px;font-size:20.80px;color:#26272c;">Google:</div>
<div class="t " style="left:1610.00px;top:833.32px;font-size:20.80px;color:#a9a9a9;letter-spacing:0.150px;">ошибка отправки</div>
<svg class="r" style="left:1783px;top:830.5px;" width="25" height="22" viewBox="0 0 25 22"><path d="M12.5 1 Q13.7 1 14.4 2.2 L24 19 Q24.6 20.8 22.8 21 H2.2 Q0.4 20.8 1 19 L10.6 2.2 Q11.3 1 12.5 1 Z" fill="#a9a9a9"/><rect x="11.1" y="7" width="2.8" height="7.6" rx="1" fill="#fff"/><circle cx="12.5" cy="17.3" r="1.6" fill="#fff"/></svg>
<div class="r" style="left:1849px;top:816px;width:54px;height:54px;border-radius:50%;background:#f1f1f3"></div>
<div class="r" style="left:1926px;top:816px;width:54px;height:54px;border-radius:50%;background:#f1f1f3"></div>
<div class="r" style="left:2004px;top:816px;width:54px;height:54px;border-radius:50%;background:#f1f1f3"></div>
<svg class="r" style="left:1863px;top:829px;" width="26" height="26" viewBox="0 0 26 26"><circle cx="11" cy="11" r="7.3" fill="none" stroke="#afabb3" stroke-width="2.4"/><path d="M16.3 16.3 L22.5 22.5" stroke="#afabb3" stroke-width="3" stroke-linecap="round"/><path d="M11 7.3 V14.7 M7.3 11 H14.7" stroke="#afabb3" stroke-width="1.9"/></svg>
<svg class="r" style="left:1942px;top:830px;" width="22" height="24" viewBox="0 0 22 24"><path d="M7.5 6.3 H3.5 Q2.3 6.3 2.3 7.5 V20.8 Q2.3 22 3.5 22 H13 Q14.2 22 14.2 20.8 V18" fill="none" stroke="#afabb3" stroke-width="1.7"/><path d="M8.5 2 H16 L20 6 V16.8 Q20 18 18.8 18 H8.5 Q7.3 18 7.3 16.8 V3.2 Q7.3 2 8.5 2 Z" fill="none" stroke="#afabb3" stroke-width="1.7" stroke-linejoin="round"/><path d="M15.6 2.2 V6.4 H19.8" fill="none" stroke="#afabb3" stroke-width="1.5"/></svg>
<svg class="r" style="left:2020px;top:837px;" width="22" height="9" viewBox="0 0 22 9"><circle cx="3.4" cy="4.5" r="2.7" fill="#afabb3"/><circle cx="10.6" cy="4.5" r="2.7" fill="#afabb3"/><circle cx="17.8" cy="4.5" r="2.7" fill="#afabb3"/></svg>
<div class="r" style="left:368px;top:893px;width:1714px;height:1px;background:#efeff0;"></div>
<div class="t " style="left:383.60px;top:933.32px;font-size:20.80px;color:#26272c;letter-spacing:0.450px;">5<span style="margin:0 -3px 0 -2px">1</span>7354</div>
<div class="t " style="left:485.20px;top:920.72px;font-size:20.80px;color:#26272c;letter-spacing:-0.060px;">Слайдер 300x600 - тестовый сниппет, оформление</div>
<div class="t " style="left:485.20px;top:944.62px;font-size:20.80px;color:#26272c;letter-spacing:-0.060px;">Getintent</div>
<svg class="r" style="left:1016px;top:928px;" width="22" height="26" viewBox="0 0 22 26"><path d="M4.1 13.8 V3.3 Q4.1 1.2 6.2 1.2 H13.6 L20.6 8.2 V22.3 Q20.6 24.4 18.5 24.4 H6.2 Q4.1 24.4 4.1 22.3 V18.4" fill="none" stroke="#9d9d9d" stroke-width="1.8" stroke-linejoin="round"/><path d="M12.9 1.4 V8.1 H20.4" fill="none" stroke="#9d9d9d" stroke-width="1.8"/><path d="M0.3 14.8 H5.4 L7.8 18 L11 11.1 L12.8 14.5 H16.5" fill="none" stroke="#9d9d9d" stroke-width="1.8" stroke-linejoin="round"/></svg>
<div class="t " style="left:1045.00px;top:933.32px;font-size:20.80px;color:#26272c;letter-spacing:0.120px;">Динамический</div>
<div class="t " style="left:1216.00px;top:933.32px;font-size:20.80px;color:#26272c;letter-spacing:0.500px;">300x600</div>
<div class="t " style="left:1363.20px;top:933.32px;font-size:20.80px;color:#26272c;">Принят</div>
<div class="t " style="left:1532.30px;top:933.32px;font-size:20.80px;color:#26272c;letter-spacing:-0.350px;">Yandex:</div>
<div class="t " style="left:1609.00px;top:933.32px;font-size:20.80px;color:#a9a9a9;letter-spacing:0.150px;">ошибка отправки</div>
<svg class="r" style="left:1783px;top:930.5px;" width="25" height="22" viewBox="0 0 25 22"><path d="M12.5 1 Q13.7 1 14.4 2.2 L24 19 Q24.6 20.8 22.8 21 H2.2 Q0.4 20.8 1 19 L10.6 2.2 Q11.3 1 12.5 1 Z" fill="#a9a9a9"/><rect x="11.1" y="7" width="2.8" height="7.6" rx="1" fill="#fff"/><circle cx="12.5" cy="17.3" r="1.6" fill="#fff"/></svg>
<div class="r" style="left:1849px;top:916px;width:54px;height:54px;border-radius:50%;background:#f1f1f3"></div>
<div class="r" style="left:1926px;top:916px;width:54px;height:54px;border-radius:50%;background:#f1f1f3"></div>
<div class="r" style="left:2004px;top:916px;width:54px;height:54px;border-radius:50%;background:#f1f1f3"></div>
<svg class="r" style="left:1863px;top:929px;" width="26" height="26" viewBox="0 0 26 26"><circle cx="11" cy="11" r="7.3" fill="none" stroke="#afabb3" stroke-width="2.4"/><path d="M16.3 16.3 L22.5 22.5" stroke="#afabb3" stroke-width="3" stroke-linecap="round"/><path d="M11 7.3 V14.7 M7.3 11 H14.7" stroke="#afabb3" stroke-width="1.9"/></svg>
<svg class="r" style="left:1942px;top:930px;" width="22" height="24" viewBox="0 0 22 24"><path d="M7.5 6.3 H3.5 Q2.3 6.3 2.3 7.5 V20.8 Q2.3 22 3.5 22 H13 Q14.2 22 14.2 20.8 V18" fill="none" stroke="#afabb3" stroke-width="1.7"/><path d="M8.5 2 H16 L20 6 V16.8 Q20 18 18.8 18 H8.5 Q7.3 18 7.3 16.8 V3.2 Q7.3 2 8.5 2 Z" fill="none" stroke="#afabb3" stroke-width="1.7" stroke-linejoin="round"/><path d="M15.6 2.2 V6.4 H19.8" fill="none" stroke="#afabb3" stroke-width="1.5"/></svg>
<svg class="r" style="left:2020px;top:937px;" width="22" height="9" viewBox="0 0 22 9"><circle cx="3.4" cy="4.5" r="2.7" fill="#afabb3"/><circle cx="10.6" cy="4.5" r="2.7" fill="#afabb3"/><circle cx="17.8" cy="4.5" r="2.7" fill="#afabb3"/></svg>
<div class="r" style="left:368px;top:993px;width:1714px;height:1px;background:#efeff0;"></div>
<div class="t " style="left:383.60px;top:1033.32px;font-size:20.80px;color:#26272c;letter-spacing:0.450px;">428755</div>
<div class="t " style="left:485.20px;top:1020.72px;font-size:20.80px;color:#26272c;letter-spacing:-0.060px;">Витрина 300x600 (6 панелей товаров) - тестовый</div>
<div class="t " style="left:485.20px;top:1044.62px;font-size:20.80px;color:#26272c;letter-spacing:-0.060px;">сниппет, оформление Getintent</div>
<svg class="r" style="left:1016px;top:1028px;" width="22" height="26" viewBox="0 0 22 26"><path d="M4.1 13.8 V3.3 Q4.1 1.2 6.2 1.2 H13.6 L20.6 8.2 V22.3 Q20.6 24.4 18.5 24.4 H6.2 Q4.1 24.4 4.1 22.3 V18.4" fill="none" stroke="#9d9d9d" stroke-width="1.8" stroke-linejoin="round"/><path d="M12.9 1.4 V8.1 H20.4" fill="none" stroke="#9d9d9d" stroke-width="1.8"/><path d="M0.3 14.8 H5.4 L7.8 18 L11 11.1 L12.8 14.5 H16.5" fill="none" stroke="#9d9d9d" stroke-width="1.8" stroke-linejoin="round"/></svg>
<div class="t " style="left:1045.00px;top:1033.32px;font-size:20.80px;color:#26272c;letter-spacing:0.120px;">Динамический</div>
<div class="t " style="left:1216.00px;top:1033.32px;font-size:20.80px;color:#26272c;letter-spacing:0.500px;">300x600</div>
<div class="t " style="left:1363.20px;top:1033.32px;font-size:20.80px;color:#26272c;">Принят</div>
<div class="t " style="left:1532.30px;top:1033.32px;font-size:20.80px;color:#26272c;">Google:</div>
<div class="t " style="left:1610.00px;top:1033.32px;font-size:20.80px;color:#a9a9a9;letter-spacing:0.150px;">ошибка отправки</div>
<svg class="r" style="left:1783px;top:1030.5px;" width="25" height="22" viewBox="0 0 25 22"><path d="M12.5 1 Q13.7 1 14.4 2.2 L24 19 Q24.6 20.8 22.8 21 H2.2 Q0.4 20.8 1 19 L10.6 2.2 Q11.3 1 12.5 1 Z" fill="#a9a9a9"/><rect x="11.1" y="7" width="2.8" height="7.6" rx="1" fill="#fff"/><circle cx="12.5" cy="17.3" r="1.6" fill="#fff"/></svg>
<div class="r" style="left:1849px;top:1016px;width:54px;height:54px;border-radius:50%;background:#f1f1f3"></div>
<div class="r" style="left:1926px;top:1016px;width:54px;height:54px;border-radius:50%;background:#f1f1f3"></div>
<div class="r" style="left:2004px;top:1016px;width:54px;height:54px;border-radius:50%;background:#f1f1f3"></div>
<svg class="r" style="left:1863px;top:1029px;" width="26" height="26" viewBox="0 0 26 26"><circle cx="11" cy="11" r="7.3" fill="none" stroke="#afabb3" stroke-width="2.4"/><path d="M16.3 16.3 L22.5 22.5" stroke="#afabb3" stroke-width="3" stroke-linecap="round"/><path d="M11 7.3 V14.7 M7.3 11 H14.7" stroke="#afabb3" stroke-width="1.9"/></svg>
<svg class="r" style="left:1942px;top:1030px;" width="22" height="24" viewBox="0 0 22 24"><path d="M7.5 6.3 H3.5 Q2.3 6.3 2.3 7.5 V20.8 Q2.3 22 3.5 22 H13 Q14.2 22 14.2 20.8 V18" fill="none" stroke="#afabb3" stroke-width="1.7"/><path d="M8.5 2 H16 L20 6 V16.8 Q20 18 18.8 18 H8.5 Q7.3 18 7.3 16.8 V3.2 Q7.3 2 8.5 2 Z" fill="none" stroke="#afabb3" stroke-width="1.7" stroke-linejoin="round"/><path d="M15.6 2.2 V6.4 H19.8" fill="none" stroke="#afabb3" stroke-width="1.5"/></svg>
<svg class="r" style="left:2020px;top:1037px;" width="22" height="9" viewBox="0 0 22 9"><circle cx="3.4" cy="4.5" r="2.7" fill="#afabb3"/><circle cx="10.6" cy="4.5" r="2.7" fill="#afabb3"/><circle cx="17.8" cy="4.5" r="2.7" fill="#afabb3"/></svg>
<div class="r" style="left:368px;top:1093px;width:1714px;height:1px;background:#efeff0;"></div>
<div class="t " style="left:383.60px;top:1133.32px;font-size:20.80px;color:#26272c;letter-spacing:0.450px;">5<span style="margin:0 -3px 0 -2px">1</span>7353</div>
<div class="t " style="left:485.20px;top:1120.72px;font-size:20.80px;color:#26272c;letter-spacing:-0.060px;">Слайдер 336x280 - тестовый сниппет, оформление</div>
<div class="t " style="left:485.20px;top:1144.62px;font-size:20.80px;color:#26272c;letter-spacing:-0.060px;">Getintent</div>
<svg class="r" style="left:1016px;top:1128px;" width="22" height="26" viewBox="0 0 22 26"><path d="M4.1 13.8 V3.3 Q4.1 1.2 6.2 1.2 H13.6 L20.6 8.2 V22.3 Q20.6 24.4 18.5 24.4 H6.2 Q4.1 24.4 4.1 22.3 V18.4" fill="none" stroke="#9d9d9d" stroke-width="1.8" stroke-linejoin="round"/><path d="M12.9 1.4 V8.1 H20.4" fill="none" stroke="#9d9d9d" stroke-width="1.8"/><path d="M0.3 14.8 H5.4 L7.8 18 L11 11.1 L12.8 14.5 H16.5" fill="none" stroke="#9d9d9d" stroke-width="1.8" stroke-linejoin="round"/></svg>
<div class="t " style="left:1045.00px;top:1133.32px;font-size:20.80px;color:#26272c;letter-spacing:0.120px;">Динамический</div>
<div class="t " style="left:1216.00px;top:1133.32px;font-size:20.80px;color:#26272c;letter-spacing:0.500px;">336x280</div>
<div class="t " style="left:1363.20px;top:1133.32px;font-size:20.80px;color:#26272c;">Принят</div>
<div class="t " style="left:1532.30px;top:1133.32px;font-size:20.80px;color:#26272c;letter-spacing:-0.350px;">Yandex:</div>
<div class="t " style="left:1609.00px;top:1133.32px;font-size:20.80px;color:#a9a9a9;letter-spacing:0.150px;">ошибка отправки</div>
<svg class="r" style="left:1783px;top:1130.5px;" width="25" height="22" viewBox="0 0 25 22"><path d="M12.5 1 Q13.7 1 14.4 2.2 L24 19 Q24.6 20.8 22.8 21 H2.2 Q0.4 20.8 1 19 L10.6 2.2 Q11.3 1 12.5 1 Z" fill="#a9a9a9"/><rect x="11.1" y="7" width="2.8" height="7.6" rx="1" fill="#fff"/><circle cx="12.5" cy="17.3" r="1.6" fill="#fff"/></svg>
<div class="r" style="left:1849px;top:1116px;width:54px;height:54px;border-radius:50%;background:#f1f1f3"></div>
<div class="r" style="left:1926px;top:1116px;width:54px;height:54px;border-radius:50%;background:#f1f1f3"></div>
<div class="r" style="left:2004px;top:1116px;width:54px;height:54px;border-radius:50%;background:#f1f1f3"></div>
<svg class="r" style="left:1863px;top:1129px;" width="26" height="26" viewBox="0 0 26 26"><circle cx="11" cy="11" r="7.3" fill="none" stroke="#afabb3" stroke-width="2.4"/><path d="M16.3 16.3 L22.5 22.5" stroke="#afabb3" stroke-width="3" stroke-linecap="round"/><path d="M11 7.3 V14.7 M7.3 11 H14.7" stroke="#afabb3" stroke-width="1.9"/></svg>
<svg class="r" style="left:1942px;top:1130px;" width="22" height="24" viewBox="0 0 22 24"><path d="M7.5 6.3 H3.5 Q2.3 6.3 2.3 7.5 V20.8 Q2.3 22 3.5 22 H13 Q14.2 22 14.2 20.8 V18" fill="none" stroke="#afabb3" stroke-width="1.7"/><path d="M8.5 2 H16 L20 6 V16.8 Q20 18 18.8 18 H8.5 Q7.3 18 7.3 16.8 V3.2 Q7.3 2 8.5 2 Z" fill="none" stroke="#afabb3" stroke-width="1.7" stroke-linejoin="round"/><path d="M15.6 2.2 V6.4 H19.8" fill="none" stroke="#afabb3" stroke-width="1.5"/></svg>
<svg class="r" style="left:2020px;top:1137px;" width="22" height="9" viewBox="0 0 22 9"><circle cx="3.4" cy="4.5" r="2.7" fill="#afabb3"/><circle cx="10.6" cy="4.5" r="2.7" fill="#afabb3"/><circle cx="17.8" cy="4.5" r="2.7" fill="#afabb3"/></svg>
</body></html>
